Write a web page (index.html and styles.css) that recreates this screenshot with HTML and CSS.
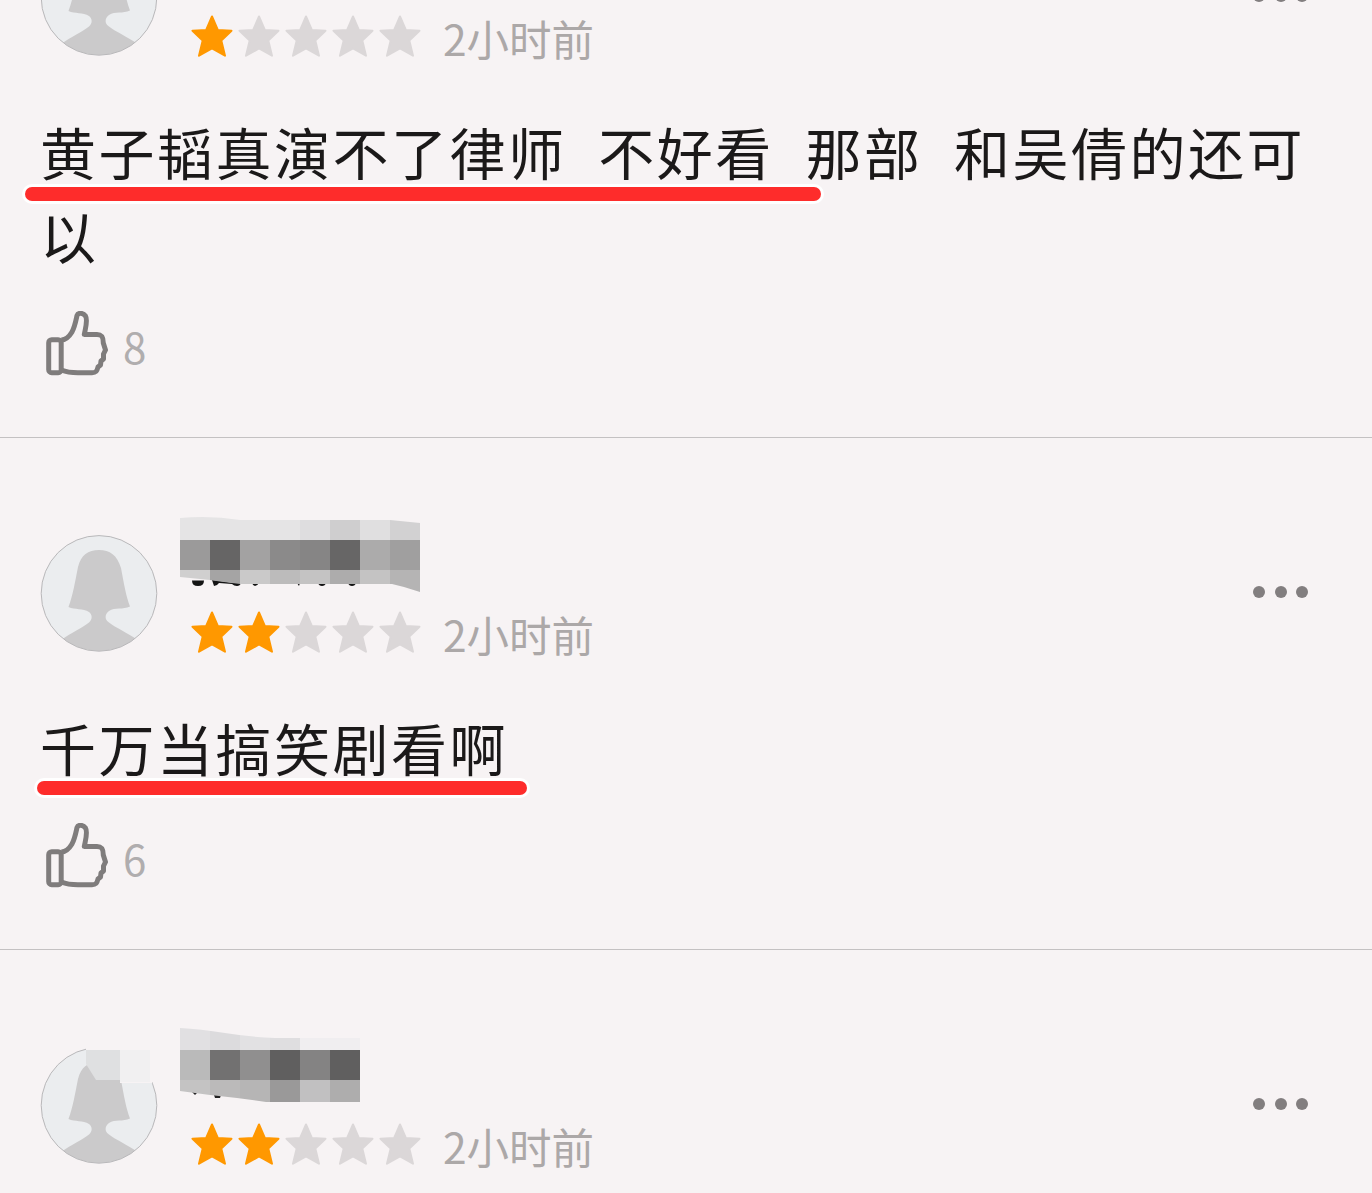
FILE: index.html
```html
<!DOCTYPE html>
<html lang="zh-CN">

<head>
    <meta charset="UTF-8">
    <title>短评</title>
    <link rel="stylesheet" href="styles.css">
</head>

<body>
    <svg class="defs" width="0" height="0">
        <symbol id="star" viewBox="0 0 42 42">
            <path d="M21 1.5 L26.8 15 L40.5 15.8 L30.3 25.5 L34 40.7 L21 33.5 L8 40.7 L11.7 25.5 L1.5 15.8 L15.2 15 Z" fill="currentColor" stroke="currentColor" stroke-width="2" stroke-linejoin="round"/>
        </symbol>
        <symbol id="like" viewBox="0 0 62 66">
            <g fill="none" stroke="#7f7c7c" stroke-width="5" stroke-linejoin="round">
                <rect x="2.7" y="28.7" width="12.5" height="33" rx="3"/>
                <path d="M15.2 29 C20 29 23 26 26 21 C29 15 30 9 31 4.5 C32 1.5 37 1.5 39.5 5 C42 9 39.5 17 38.3 23.4 H51 C56 23.4 57.3 26 57.3 32 L59.5 39 L57.5 43 L57.5 48 L55 50 L54.5 54 L52 56 C51 60 50 61.7 46 61.7 H32 C25 61.7 19 60.5 15.2 59"/>
            </g>
        </symbol>
        <symbol id="person" viewBox="0 0 118 118">
            <clipPath id="round"><circle cx="59" cy="59.4" r="57.6"/></clipPath>
            <circle cx="59" cy="59.4" r="57.8" fill="#ebedef"/>
            <path clip-path="url(#round)" fill="#cbcacb" d="M28.5 73 C33 61 35 48 38 33 C41 21 48 16 59 16 C70 16 77 21 81 34 C84 50 86 62 90 72.5 C83 76 75 73 69 77 C65 80 64 85 69 88.5 C76 94 86 98 98 106 V120 H20 V107 C32 98 42 94 49 88.5 C53 85 52 80 49 78 C43 74 35 76 28.5 73 Z"/>
            <circle cx="59" cy="59.4" r="57.8" fill="none" stroke="#b9b8ba" stroke-width="1"/>
        </symbol>
    </svg>

    <div class="reviews">
        <div class="review">
            <div class="header">
                <svg class="avatar"><use href="#person"/></svg>
                <div class="info">
                    <div class="name"></div>
                    <div class="rating">
                        <svg class="star on"><use href="#star"/></svg>
                        <svg class="star"><use href="#star"/></svg>
                        <svg class="star"><use href="#star"/></svg>
                        <svg class="star"><use href="#star"/></svg>
                        <svg class="star"><use href="#star"/></svg>
                        <span class="time">2小时前</span>
                    </div>
                </div>
                <div class="more"><i></i><i></i><i></i></div>
            </div>
            <div class="content">
                <p class="text">黄子韬真演不了律师  不好看  那部  和吴倩的还可以</p>
                <div class="mark mark-long"></div>
            </div>
            <div class="likes">
                <svg class="thumb"><use href="#like"/></svg>
                <span>8</span>
            </div>
        </div>

        <div class="review">
            <div class="header">
                <svg class="avatar"><use href="#person"/></svg>
                <div class="info">
                    <svg class="name" viewBox="0 0 240 76">
                        <clipPath id="edge1"><path d="M0 2 Q30 -1 60 4 H210 L240 7 V76 L224 71 L212 68 H60 L40 65.5 L30 64 L0 61 Z"/></clipPath>
                        <g fill="#141414">
                            <path d="M12 64.5 H24 Q24 70 18 70 Q12 70 12 64.5 Z"/>
                            <path d="M32 64 L40 65 L54 67 H61 Q60 70 57 70 Q54 70 52 68 L39 67 Q37 70 34 70 Z"/>
                            <path d="M72 67 H79 Q77 70 75 70 Q73 70 72 67 Z"/>
                            <path d="M117 67 H120 L119 70 Z"/>
                            <path d="M138 67 H146 Q145 70 142 70 Q139 70 138 67 Z"/>
                            <path d="M168 67 H176 Q175 70 172 70 Q169 70 168 67 Z"/>
                        </g>
                        <g clip-path="url(#edge1)" shape-rendering="crispEdges">
                            <rect width="120" height="24" fill="#e5e4e5"/>
                            <rect x="120" width="30" height="24" fill="#dedddf"/>
                            <rect x="150" width="30" height="24" fill="#cfcecf"/>
                            <rect x="180" width="30" height="24" fill="#e0dfe0"/>
                            <rect x="210" width="30" height="24" fill="#d2d1d2"/>
                            <rect y="24" width="30" height="30" fill="#9b9a9a"/>
                            <rect x="30" y="24" width="30" height="30" fill="#666565"/>
                            <rect x="60" y="24" width="30" height="30" fill="#a3a2a2"/>
                            <rect x="90" y="24" width="30" height="30" fill="#8b8a8a"/>
                            <rect x="120" y="24" width="30" height="30" fill="#868585"/>
                            <rect x="150" y="24" width="30" height="30" fill="#676666"/>
                            <rect x="180" y="24" width="30" height="30" fill="#acabab"/>
                            <rect x="210" y="24" width="30" height="30" fill="#a09f9f"/>
                            <rect y="54" width="30" height="22" fill="#d0cfcf"/>
                            <rect x="30" y="54" width="30" height="22" fill="#a5a4a4"/>
                            <rect x="60" y="54" width="30" height="22" fill="#cac9c9"/>
                            <rect x="90" y="54" width="30" height="22" fill="#bcbbbb"/>
                            <rect x="120" y="54" width="30" height="22" fill="#c4c3c3"/>
                            <rect x="150" y="54" width="30" height="22" fill="#adacac"/>
                            <rect x="180" y="54" width="30" height="22" fill="#c4c3c3"/>
                            <rect x="210" y="54" width="30" height="22" fill="#b5b4b4"/>
                        </g>
                    </svg>
                    <div class="rating">
                        <svg class="star on"><use href="#star"/></svg>
                        <svg class="star on"><use href="#star"/></svg>
                        <svg class="star"><use href="#star"/></svg>
                        <svg class="star"><use href="#star"/></svg>
                        <svg class="star"><use href="#star"/></svg>
                        <span class="time">2小时前</span>
                    </div>
                </div>
                <div class="more"><i></i><i></i><i></i></div>
            </div>
            <div class="content">
                <p class="text">千万当搞笑剧看啊</p>
                <div class="mark mark-short"></div>
            </div>
            <div class="likes">
                <svg class="thumb"><use href="#like"/></svg>
                <span>6</span>
            </div>
        </div>

        <div class="review">
            <div class="header">
                <svg class="avatar" viewBox="0 0 118 118">
                    <use href="#person"/>
                    <path d="M46 0 H80 V4 H46 Z M80 0 H112 V37 H80 Z" fill="#f7f3f4"/>
                    <path d="M46 4 H80 V34 H56 L46 18 Z" fill="#dfe0e1"/>
                    <path d="M80 4 H110 V36 H80 Z" fill="#f1f0f1"/>
                </svg>
                <div class="info">
                    <svg class="name" viewBox="0 0 240 76">
                        <clipPath id="edge2"><path d="M0 0 Q20 1 45 5 T95 10 H180 V74 H86 L57 70 L30 67 L0 63 Z"/></clipPath>
                        <path d="M34 67 H41 L40 70 H35 Z M11 63 L17 65 L15 67 Z" fill="#222"/>
                        <g clip-path="url(#edge2)" shape-rendering="crispEdges">
                            <rect width="30" height="22" fill="#e1e0e2"/>
                            <rect x="30" width="30" height="22" fill="#dcdbdd"/>
                            <rect x="60" width="30" height="22" fill="#e2e1e3"/>
                            <rect x="90" width="30" height="22" fill="#dfdee0"/>
                            <rect x="120" width="60" height="22" fill="#f0eef0"/>
                            <rect y="22" width="30" height="30" fill="#bababa"/>
                            <rect x="30" y="22" width="30" height="30" fill="#727171"/>
                            <rect x="60" y="22" width="30" height="30" fill="#908f8f"/>
                            <rect x="90" y="22" width="30" height="30" fill="#605f5f"/>
                            <rect x="120" y="22" width="30" height="30" fill="#848383"/>
                            <rect x="150" y="22" width="30" height="30" fill="#605f5f"/>
                            <rect y="52" width="30" height="22" fill="#c4c3c3"/>
                            <rect x="30" y="52" width="30" height="22" fill="#bbbaba"/>
                            <rect x="60" y="52" width="30" height="22" fill="#b6b5b5"/>
                            <rect x="90" y="52" width="30" height="22" fill="#9a9999"/>
                            <rect x="120" y="52" width="30" height="22" fill="#c1c0c1"/>
                            <rect x="150" y="52" width="30" height="22" fill="#aeadad"/>
                        </g>
                    </svg>
                    <div class="rating">
                        <svg class="star on"><use href="#star"/></svg>
                        <svg class="star on"><use href="#star"/></svg>
                        <svg class="star"><use href="#star"/></svg>
                        <svg class="star"><use href="#star"/></svg>
                        <svg class="star"><use href="#star"/></svg>
                        <span class="time">2小时前</span>
                    </div>
                </div>
                <div class="more"><i></i><i></i><i></i></div>
            </div>
        </div>
    </div>
</body>

</html>
```
FILE: styles.css
```css
body {
    font-family: "Noto Sans CJK SC", sans-serif;
    background: #f7f3f4;
    margin: 0;
    height: 1193px;
    overflow: hidden;
}

.defs {
    display: block;
}

/* the list is scrolled, the first review starts above the window */
.reviews {
    margin-top: -158px;
}

.review {
    padding: 78px 40px 61px;
    border-bottom: 1px solid #c4c1c2;
}

.header {
    display: flex;
    height: 138px;
}

.avatar {
    width: 118px;
    height: 118px;
    margin-top: 18px;
}

.info {
    flex: 1;
    margin-left: 22px;
}

.name {
    display: block;
    width: 240px;
    height: 76px;
}

.rating {
    display: flex;
    align-items: center;
    gap: 5px;
    height: 42px;
    margin: 19px 0 0 11px;
}

.star {
    width: 42px;
    height: 42px;
    color: #dbd7d8;
}

.star.on {
    color: #ff9800;
}

.time {
    margin-left: 17px;
    padding-top: 3px;
    font-size: 42.5px;
    line-height: 42px;
    color: #aca8a8;
}

.more {
    display: flex;
    gap: 9.5px;
    margin: 69.5px 24px 0 0;
}

.more i {
    width: 12px;
    height: 12px;
    border-radius: 50%;
    background: #827e7f;
}

.content {
    position: relative;
    margin-top: 51px;
}

.text {
    margin: 0;
    padding-bottom: 5px;
    font-size: 56px;
    line-height: 84px;
    letter-spacing: 2.5px;
    color: #1b1919;
    white-space: pre-wrap;
    word-spacing: 0.8px;
}

/* hand drawn highlight under the text */
.mark {
    position: absolute;
    height: 14px;
    border-radius: 7px;
    background: #fe2c2b;
    box-shadow: 0 0 0 3px #fff;
}

.mark-long {
    left: -15px;
    top: 78px;
    width: 796px;
}

.mark-short {
    left: -3px;
    top: 76px;
    width: 490px;
}

.likes {
    display: flex;
    align-items: center;
    height: 64px;
    margin-top: 30px;
    padding-left: 6px;
    font-size: 42px;
    line-height: 62px;
    color: #b0adae;
}

.likes span {
    padding-top: 4px;
}

.thumb {
    width: 62px;
    height: 66px;
    margin-right: 15px;
}
```
